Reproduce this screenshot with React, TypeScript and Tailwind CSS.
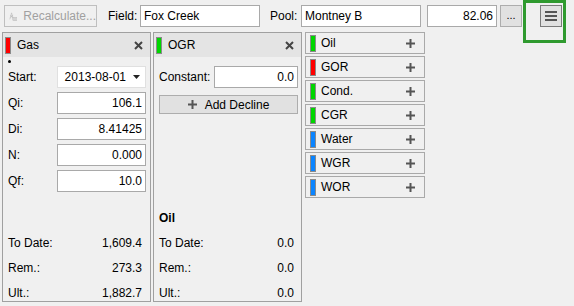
import React from 'react';

function ColorBar({ color }: { color: string }) {
  return <span className={`block w-[6px] h-[17px] border border-[#8a8a8a] ${color}`} />;
}

function CloseX() {
  return (
    <svg className="w-[9px] h-[9px]" viewBox="0 0 9 9">
      <path d="M1 1L8 8M8 1L1 8" stroke="#444" strokeWidth={2} />
    </svg>
  );
}

function Plus() {
  return (
    <svg className="w-[9px] h-[9px]" viewBox="0 0 9 9">
      <path d="M4.5 0V9M0 4.5H9" stroke="#555" strokeWidth={2} />
    </svg>
  );
}

function Field({ label, value }: { label: string; value: string }) {
  return (
    <div className="flex items-center h-[22px]">
      <span className="w-[49px]">{label}</span>
      <div className="w-[89px] h-[22px] bg-white border border-[#a9a9a9] flex items-center justify-end pr-[3px]">
        {value}
      </div>
    </div>
  );
}

function Totals({ toDate, rem, ult }: { toDate: string; rem: string; ult: string }) {
  const rows: [string, string][] = [
    ['To Date:', toDate],
    ['Rem.:', rem],
    ['Ult.:', ult],
  ];
  return (
    <div className="flex flex-col gap-[11px]">
      {rows.map(([l, v]) => (
        <div key={l} className="flex justify-between leading-[14px]">
          <span>{l}</span>
          <span>{v}</span>
        </div>
      ))}
    </div>
  );
}

function Header({ name, color }: { name: string; color: string }) {
  return (
    <div className="h-[24px] bg-[#e4e4e4] flex items-center pl-[2px] pr-[7px]">
      <ColorBar color={color} />
      <span className="ml-[6px] flex-1">{name}</span>
      <CloseX />
    </div>
  );
}

const products: [string, string][] = [
  ['Oil', 'bg-[#00d600]'],
  ['GOR', 'bg-[#ff0000]'],
  ['Cond.', 'bg-[#00d600]'],
  ['CGR', 'bg-[#00d600]'],
  ['Water', 'bg-[#0a84ff]'],
  ['WGR', 'bg-[#0a84ff]'],
  ['WOR', 'bg-[#0a84ff]'],
];

export default function App() {
  return (
    <div className="relative w-[574px] h-[306px] bg-[#f0f0f0] text-[12px] text-black font-['Liberation_Sans',Arial,sans-serif] overflow-hidden">
      {/* toolbar */}
      <div className="flex items-center pt-[5px] pl-[4px] h-[27px]">
        <button className="w-[93px] h-[22px] border border-[#bfbfbf] bg-[#f0f0f0] flex items-center pl-[4px] text-[#a0a0a0]">
          <svg className="w-[16px] h-[17px]" viewBox="0 0 16 17" fill="none">
            <path d="M1.5 14L5 1.5L8.5 14M2.5 11L8 6M7.5 11L2.5 6.5M3.5 7.5H7" stroke="#b4b4b4" strokeWidth={1} />
            <rect x="7.5" y="10.5" width="8" height="6" fill="#e8e8e8" stroke="#b4b4b4" />
            <path d="M7.5 12.5H15.5M7.5 14.5H15.5M10 10.5V16.5M12.8 10.5V16.5" stroke="#c4c4c4" strokeWidth={0.8} />
          </svg>
          <span className="ml-[6px]">Recalculate...</span>
        </button>
        <span className="ml-[11px] w-[32px]">Field:</span>
        <div className="w-[120px] h-[22px] bg-white border border-[#a9a9a9] flex items-center pl-[3px]">Fox Creek</div>
        <span className="ml-[10px] w-[31px]">Pool:</span>
        <div className="w-[120px] h-[22px] bg-white border border-[#a9a9a9] flex items-center pl-[3px]">Montney B</div>
        <div className="ml-[6px] w-[70px] h-[22px] bg-white border border-[#a9a9a9] flex items-center justify-end pr-[3px]">82.06</div>
        <button className="ml-[3px] w-[22px] h-[22px] bg-[#e1e1e1] border border-[#adadad] flex items-end justify-center pb-[5px] leading-none text-[11px]">...</button>
        <button className="ml-[18px] w-[22px] h-[22px] bg-[#e1e1e1] border border-[#7a7a7a] flex flex-col items-center justify-center gap-[2px]">
          <span className="block w-[12px] h-[2px] bg-[#555]" />
          <span className="block w-[12px] h-[2px] bg-[#555]" />
          <span className="block w-[12px] h-[2px] bg-[#555]" />
        </button>
      </div>
      {/* highlight around menu button */}
      <div className="absolute left-[523px] top-0 w-[43px] h-[43px] border-[3px] border-[#2f9a2f]" />

      {/* panels */}
      <div className="flex items-start pt-[5px] pl-[2px]">
        {/* Gas */}
        <div className="w-[149px] h-[270px] border border-[#a0a0a0] flex flex-col">
          <Header name="Gas" color="bg-[#ff0000]" />
          <div className="pl-[5px] pt-[3px] h-[9px]">
            <span className="block w-[3px] h-[3px] rounded-full bg-black" />
          </div>
          <div className="flex flex-col gap-[4px] pl-[5px]">
            <div className="flex items-center h-[22px]">
              <span className="w-[49px]">Start:</span>
              <div className="w-[89px] h-[22px] bg-white border border-[#e0e0e0] flex items-center justify-end pr-[5px] gap-[7px]">
                <span>2013-08-01</span>
                <svg className="w-[7px] h-[4px]" viewBox="0 0 7 4">
                  <path d="M0 0H7L3.5 4Z" fill="#222" />
                </svg>
              </div>
            </div>
            <Field label="Qi:" value="106.1" />
            <Field label="Di:" value="8.41425" />
            <Field label="N:" value="0.000" />
            <Field label="Qf:" value="10.0" />
          </div>
          <div className="mt-auto pl-[5px] pr-[8px] pb-[1px]">
            <Totals toDate="1,609.4" rem="273.3" ult="1,882.7" />
          </div>
        </div>

        {/* OGR */}
        <div className="ml-[2px] w-[149px] h-[270px] border border-[#a0a0a0] flex flex-col">
          <Header name="OGR" color="bg-[#00d600]" />
          <div className="pl-[5px] pr-[3px] pt-[9px] flex flex-col">
            <div className="flex items-center h-[22px]">
              <span className="w-[55px]">Constant:</span>
              <div className="flex-1 h-[22px] bg-white border border-[#a9a9a9] flex items-center justify-end pr-[3px]">0.0</div>
            </div>
            <button className="mt-[7px] h-[19px] bg-[#e1e1e1] border border-[#adadad] flex items-center justify-center gap-[8px]">
              <Plus />
              <span>Add Decline</span>
            </button>
          </div>
          <div className="mt-auto pl-[5px] pr-[7px] pb-[1px] flex flex-col gap-[11px]">
            <span className="font-bold leading-[14px]">Oil</span>
            <Totals toDate="0.0" rem="0.0" ult="0.0" />
          </div>
        </div>

        {/* product list */}
        <div className="ml-[3px] flex flex-col gap-[2px]">
          {products.map(([name, color]) => (
            <div key={name} className="w-[120px] h-[22px] border border-[#a9a9a9] bg-[#f0f0f0] flex items-center pl-[4px] pr-[9px]">
              <ColorBar color={color} />
              <span className="ml-[5px] flex-1">{name}</span>
              <Plus />
            </div>
          ))}
        </div>
      </div>
    </div>
  );
}
